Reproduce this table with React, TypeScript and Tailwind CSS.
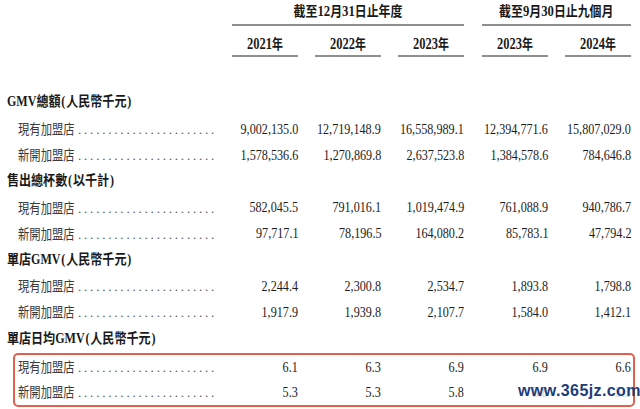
import React from "react";

type RowData = { label: string; vals: string[]; faint?: boolean[] };

const gaps = ["", "ml-[17px]", "ml-[17px]", "ml-[18px]", "ml-[17px]"];

function Num({ v, faint }: { v: string; faint?: boolean }) {
  return (
    <div className="flex w-[66px] justify-end whitespace-nowrap">
      <span
        className={
          faint
            ? "inline-block shrink-0 origin-right scale-x-[0.81] text-[15px] leading-none text-[#cfcfcf]"
            : "inline-block shrink-0 origin-right scale-x-[0.81] text-[15px] leading-none text-[#1c1c1c]"
        }
      >
        {v}
      </span>
    </div>
  );
}

function DataRow({ r, inBox }: { r: RowData; inBox?: boolean }) {
  return (
    <div className={inBox ? "flex items-center h-[25px]" : "flex items-center h-[26.2px]"}>
      <div className={inBox ? "flex items-baseline w-[217px] pl-[3px]" : "flex items-baseline w-[232px] pl-[18px]"}>
        <span className="inline-block w-[60px] whitespace-nowrap">
          <span className="inline-block origin-left scale-x-[0.81] text-[14px] leading-none text-[#3a3a3a]">
            {r.label}
          </span>
        </span>
        <span className="text-[13px] tracking-[2.8px] leading-none text-[#555]">
          {".".repeat(23)}
        </span>
      </div>
      {r.vals.map((v, i) => (
        <div key={i} className={gaps[i]}>
          <Num v={v} faint={r.faint ? r.faint[i] : false} />
        </div>
      ))}
    </div>
  );
}

function Section({ children, first }: { children: React.ReactNode; first?: boolean }) {
  return (
    <div className={first ? "flex items-center h-[28px] pl-[7px]" : "flex items-center h-[26.2px] pl-[7px]"}>
      <span className="inline-block origin-left scale-x-[0.86] whitespace-nowrap font-bold text-[14px] leading-none text-[#1a1a1a]">
        {children}
      </span>
    </div>
  );
}

function Year({ y, cls }: { y: string; cls: string }) {
  return (
    <div className={"w-[66px] border-b-2 border-[#8f8f8f] pt-[10px] pb-[2px] text-center leading-[16px] " + cls}>
      <span className="inline-block scale-x-[0.78] whitespace-nowrap font-bold text-[#1a1a1a]">
        <span className="text-[16px]">{y}</span>
        <span className="text-[14px]">年</span>
      </span>
    </div>
  );
}

export default function App() {
  return (
    <div className="relative w-[640px] h-[409px] overflow-hidden bg-white font-['Liberation_Serif','Noto_Sans_CJK_TC',serif]">
      {/* Header group row */}
      <div className="flex">
        <div className="w-[232px]" />
        <div className="w-[232px] border-b-2 border-[#8f8f8f] pt-[3px] pb-[4px] text-center leading-[16px]">
          <span className="inline-block scale-x-[0.85] whitespace-nowrap font-bold text-[14px] text-[#1a1a1a]">
            截至<span className="text-[15px]">12</span>月<span className="text-[15px]">31</span>日止年度
          </span>
        </div>
        <div className="ml-[18px] w-[149px] border-b-2 border-[#8f8f8f] pt-[3px] pb-[4px] text-center leading-[16px]">
          <span className="inline-block scale-x-[0.85] whitespace-nowrap font-bold text-[14px] text-[#1a1a1a]">
            截至<span className="text-[15px]">9</span>月<span className="text-[15px]">30</span>日止九個月
          </span>
        </div>
      </div>
      {/* Year row */}
      <div className="flex">
        <div className="w-[232px]" />
        <Year y="2021" cls="" />
        <Year y="2022" cls="ml-[17px]" />
        <Year y="2023" cls="ml-[17px]" />
        <Year y="2023" cls="ml-[18px]" />
        <Year y="2024" cls="ml-[17px]" />
      </div>

      <div className="mt-[31px]">
        <Section first>
          GMV總額<span className="mx-[1px]">(</span>人民幣千元<span className="ml-[1px]">)</span>
        </Section>
        <DataRow r={{ label: "現有加盟店", vals: ["9,002,135.0", "12,719,148.9", "16,558,989.1", "12,394,771.6", "15,807,029.0"] }} />
        <DataRow r={{ label: "新開加盟店", vals: ["1,578,536.6", "1,270,869.8", "2,637,523.8", "1,384,578.6", "784,646.8"] }} />
        <Section>
          售出總杯數<span className="mx-[1px]">(</span>以千計<span className="ml-[1px]">)</span>
        </Section>
        <DataRow r={{ label: "現有加盟店", vals: ["582,045.5", "791,016.1", "1,019,474.9", "761,088.9", "940,786.7"] }} />
        <DataRow r={{ label: "新開加盟店", vals: ["97,717.1", "78,196.5", "164,080.2", "85,783.1", "47,794.2"] }} />
        <Section>
          單店GMV<span className="mx-[1px]">(</span>人民幣千元<span className="ml-[1px]">)</span>
        </Section>
        <DataRow r={{ label: "現有加盟店", vals: ["2,244.4", "2,300.8", "2,534.7", "1,893.8", "1,798.8"] }} />
        <DataRow r={{ label: "新開加盟店", vals: ["1,917.9", "1,939.8", "2,107.7", "1,584.0", "1,412.1"] }} />
        <Section>
          單店日均GMV<span className="mx-[1px]">(</span>人民幣千元<span className="ml-[1px]">)</span>
        </Section>
        <div className="mt-[1px] ml-[13px] w-[622px] rounded-[5px] border-2 border-[#e2604e]">
          <DataRow inBox r={{ label: "現有加盟店", vals: ["6.1", "6.3", "6.9", "6.9", "6.6"] }} />
          <DataRow
            inBox
            r={{ label: "新開加盟店", vals: ["5.3", "5.3", "5.8", "5.8", "5.3"], faint: [false, false, false, true, true] }}
          />
        </div>
      </div>

      <div className="absolute left-[518px] top-[383px] whitespace-nowrap font-['Liberation_Sans',sans-serif] font-bold text-[16px] tracking-[0.4px] leading-none text-[#1d3c7a]">
        www.365jz.com
      </div>
    </div>
  );
}
